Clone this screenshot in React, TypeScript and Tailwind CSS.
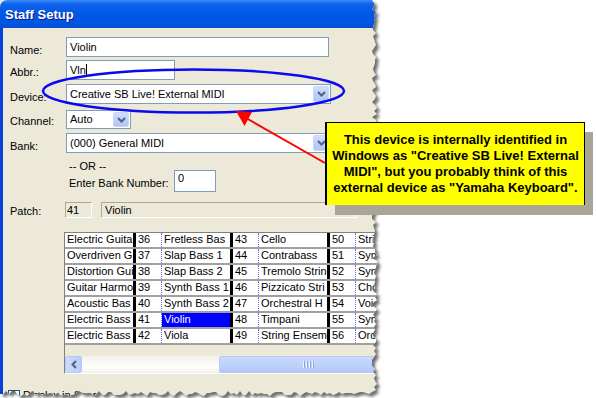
import React from 'react';

const ui = "font-['Liberation_Sans',Arial,sans-serif]";

// torn paper edge: fixed pseudo-random jags so every render looks the same
function makeRand(seed: number) {
  let s = seed;
  return () => {
    s = (s * 16807) % 2147483647;
    return (s - 1) / 2147483646;
  };
}
const rand = makeRand(11);
const edge: [number, number][] = [[0, 0]];
for (let y = 0; y <= 390; y += 3) edge.push([372 + Math.round(rand() * 5), y]);
for (let x = 372; x >= 0; x -= 3) edge.push([x, 391 + Math.round(rand() * 5)]);
edge.push([0, 393]);
const inside = 'M' + edge.map(p => p.join(' ')).join(' L') + ' Z';
const outside = 'M0 0 H596 V398 H0 Z ' + inside;

const firstCol = ['Electric Guita', 'Overdriven G', 'Distortion Gui', 'Guitar Harmo', 'Acoustic Bas', 'Electric Bass', 'Electric Bass'];
const groups = [
  { start: 36, names: ['Fretless Bas', 'Slap Bass 1', 'Slap Bass 2', 'Synth Bass 1', 'Synth Bass 2', 'Violin', 'Viola'] },
  { start: 43, names: ['Cello', 'Contrabass', 'Tremolo Strin', 'Pizzicato Stri', 'Orchestral H', 'Timpani', 'String Ensem'] },
  { start: 50, names: ['String Ense', 'SynthString', 'SynthString', 'Choir Aahs', 'Voice Oohs', 'Synth Voice', 'Orchestra H'] },
];

function DropButton() {
  return (
    <div className="w-[16px] shrink-0 h-full rounded-[2px] border border-[#c9d7fb] bg-[linear-gradient(180deg,#d2defc_0%,#bccdf8_60%,#b1c5f5_100%)] flex items-center justify-center">
      <svg width="9" height="6" viewBox="0 0 9 6">
        <path d="M1 1 L4.5 4.5 L8 1" fill="none" stroke="#4d6185" strokeWidth="2" />
      </svg>
    </div>
  );
}

function Select({ value, w }: { value: string; w: string }) {
  return (
    <div className={`${w} h-full border border-[#7f9db9] bg-white flex items-stretch p-[1px]`}>
      <div className="flex-1 pl-[2px] flex items-center whitespace-nowrap overflow-hidden">{value}</div>
      <DropButton />
    </div>
  );
}

const staticBox = 'h-full border border-[#aca899] border-b-white border-r-white flex items-center shrink-0';

export default function App() {
  return (
    <div className={`relative w-[596px] h-[398px] bg-white overflow-hidden text-[11px] leading-[13px] text-black ${ui}`}>
      <div className="w-[400px] h-[398px] flex flex-col bg-[#ece9d8]">
        <div className="h-[28px] shrink-0 rounded-tl-[7px] bg-[linear-gradient(180deg,#3a8ff8_0%,#0f63ec_14%,#0058e6_50%,#0055e2_85%,#0b4cd0_100%)] flex items-center pl-[5px] pt-[1px]">
          <span className="text-white font-bold text-[13px] [text-shadow:1px_1px_#0a1e8c]">Staff Setup</span>
        </div>

        <div className="h-[370px] shrink-0 border-l-[3px] border-[#0a3fd9] pl-[7px] flex flex-col [&>*]:shrink-0">
          <div className="mt-[9px] h-[20px] flex items-center">
            <span className="w-[56px] pt-[6px]">Name:</span>
            <div className="w-[263px] h-full border border-[#7f9db9] bg-white pl-[3px] flex items-center">Violin</div>
          </div>

          <div className="mt-[3px] h-[20px] flex items-center">
            <span className="w-[56px] pt-[4px]">Abbr.:</span>
            <div className="w-[109px] h-full border border-[#7f9db9] bg-white pl-[3px] flex items-center">
              Vln<span className="w-[1px] h-[13px] bg-black" />
            </div>
          </div>

          <div className="mt-[4px] h-[20px] flex items-center">
            <span className="w-[56px] pt-[6px]">Device:</span>
            <Select value="Creative SB Live! External MIDI" w="w-[265px]" />
          </div>

          <div className="mt-[6px] h-[19px] flex items-center">
            <span className="w-[56px] pt-[4px]">Channel:</span>
            <Select value="Auto" w="w-[65px]" />
          </div>

          <div className="mt-[4px] h-[20px] flex items-center">
            <span className="w-[56px] pt-[6px]">Bank:</span>
            <Select value="(000) General MIDI" w="w-[265px]" />
          </div>

          <div className="mt-[7px] flex items-start pl-[59px]">
            <div className="w-[105px] flex flex-col">
              <span>-- OR --</span>
              <span className="mt-[4px]">Enter Bank Number:</span>
            </div>
            <div className="mt-[10px] w-[42px] h-[22px] border border-[#7f9db9] bg-white pl-[3px] pt-[1px]">0</div>
          </div>

          <div className="mt-[10px] h-[16px] flex items-center">
            <span className="w-[55px] pt-[3px]">Patch:</span>
            <div className={`w-[27px] pl-[1px] ${staticBox}`}>41</div>
            <div className={`ml-[9px] w-[256px] pl-[3px] ${staticBox}`}>Violin</div>
          </div>

          <div className="mt-[14px] ml-[54px] w-[330px] overflow-hidden border-t border-l border-[#808080] border-b border-b-white flex flex-col">
            {firstCol.map((first, r) => (
              <div key={r} className="h-[16px] shrink-0 flex border-b-2 border-[#a0a0a0] bg-white [&>*]:shrink-0">
                <div className="w-[68px] pl-[2px] whitespace-nowrap overflow-hidden">{first}</div>
                {groups.map((g, gi) => {
                  const sel = gi === 0 && r === 5;
                  return (
                    <React.Fragment key={gi}>
                      <div className="w-[3px] bg-black" />
                      <div className="w-[25px] pl-[2px]">{g.start + r}</div>
                      <div className="w-[1px] border-l border-dotted border-[#6a6aff]" />
                      <div className={`w-[68px] pl-[2px] whitespace-nowrap overflow-hidden ${sel ? 'bg-[#0000ff] text-white' : ''}`}>{g.names[r]}</div>
                    </React.Fragment>
                  );
                })}
              </div>
            ))}
            <div className="h-[11px] shrink-0" />
            <div className="h-[17px] shrink-0 flex bg-[linear-gradient(180deg,#f3f1ec_0%,#fefefb_60%,#f3f1ec_100%)] [&>*]:shrink-0">
              <div className="w-[17px] h-full rounded-[2px] border border-[#b4c8f6] bg-[linear-gradient(90deg,#cddbfc_0%,#b9cdf8_100%)] flex items-center justify-center">
                <svg width="6" height="9" viewBox="0 0 6 9">
                  <path d="M5 1 L1.5 4.5 L5 8" fill="none" stroke="#4d6185" strokeWidth="2" />
                </svg>
              </div>
              <div className="w-[137px]" />
              <div className="w-[178px] h-full rounded-[2px] border border-[#b4c9f9] bg-[linear-gradient(180deg,#cbdafc_0%,#bcd0fa_60%,#b2c7f6_100%)] flex items-center justify-center gap-[1px]">
                {[0, 1, 2, 3].map(i => (
                  <div key={i} className="w-[2px] h-[7px] bg-[#eef3ff] border-r border-[#8ca6e0]" />
                ))}
              </div>
            </div>
          </div>

          <div className="mt-[15px] -ml-[2px] flex items-center gap-[3px]">
            <div className="w-[12px] h-[12px] border border-[#1c5180] bg-white" />
            <span>Display in Score</span>
          </div>
        </div>
      </div>

      {/* torn right and bottom edges */}
      <svg className="absolute inset-0 pointer-events-none" width="596" height="398">
        <defs>
          <clipPath id="outside">
            <path d={outside} clipRule="evenodd" />
          </clipPath>
          <filter id="blur" x="-5%" y="-5%" width="110%" height="110%">
            <feGaussianBlur stdDeviation="1.6" />
          </filter>
        </defs>
        <path d={outside} fill="#fff" fillRule="evenodd" />
        <g clipPath="url(#outside)">
          <path d={inside} transform="translate(3 3)" fill="#6e6e6e" filter="url(#blur)" />
        </g>
      </svg>

      {/* ellipse and arrow */}
      <svg className="absolute inset-0 pointer-events-none" width="596" height="398">
        <ellipse cx="193.5" cy="91" rx="150.5" ry="21.5" fill="none" stroke="#0a0af0" strokeWidth="2.5" />
        <line x1="325" y1="163" x2="246" y2="118" stroke="#ff0000" strokeWidth="2" />
        <polygon points="236,111 252,112 244.5,126" fill="#ff0000" />
      </svg>

      <div className="absolute left-[335px] top-[132px] w-[258px] h-[83px] bg-[#a9a597]" />
      <div className={`absolute left-[325px] top-[122px] w-[260px] h-[83px] bg-[#ffff00] border-l-2 border-t border-r border-black pt-[9px] flex flex-col items-center font-bold text-[13px] leading-[16px] whitespace-nowrap ${ui}`}>
        <span>This device is internally identified in</span>
        <span>Windows as "Creative SB Live! External</span>
        <span>MIDI", but you probably think of this</span>
        <span>external device as "Yamaha Keyboard".</span>
      </div>
    </div>
  );
}
